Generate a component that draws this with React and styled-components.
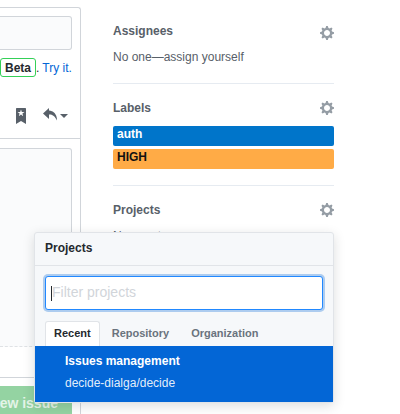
import React from "react";
import styled, { createGlobalStyle } from "styled-components";

const Global = createGlobalStyle`
  html, body { margin: 0; padding: 0; background: #fff; }
  body { font-family: "Liberation Sans", Arial, sans-serif; font-size: 12px; color: #24292e; }
`;

const Page = styled.div`
  position: relative;
  display: flex;
  align-items: flex-start;
  width: 400px;
  height: 414px;
  overflow: hidden;
  background: #fff;
`;

const Card = styled.div`
  flex: none;
  width: 81px;
  height: 407px;
  margin-top: 7px;
  box-sizing: border-box;
  display: flex;
  flex-direction: column;
  border-top: 1px solid #d1d5da;
  border-right: 1px solid #d1d5da;
  border-top-right-radius: 3px;
`;

const TitleInput = styled.div`
  flex: none;
  height: 34px;
  margin: 8px 8px 0 0;
  box-sizing: border-box;
  background: #fafbfc;
  border: 1px solid #d1d5da;
  border-left: none;
  border-radius: 0 3px 3px 0;
`;

const BetaRow = styled.div`
  flex: none;
  display: flex;
  align-items: center;
  height: 19px;
  margin-top: 8px;
  color: #0366d6;
  white-space: nowrap;
`;

const Beta = styled.span`
  display: inline-flex;
  align-items: center;
  justify-content: center;
  box-sizing: border-box;
  width: 36px;
  height: 19px;
  border: 1px solid #34d058;
  border-radius: 3px;
  font-weight: 700;
  color: #24292e;
`;

const Dot = styled.span`
  color: #24292e;
`;

const TryIt = styled.span`
  margin-left: 3px;
`;

const Toolbar = styled.div`
  flex: none;
  display: flex;
  align-items: flex-start;
  height: 62px;
  box-sizing: border-box;
  padding: 31px 0 0 16px;
  border-bottom: 1px solid #d1d5da;
`;

const BookmarkIcon = styled.svg`
  width: 10px;
  height: 16px;
  fill: #586069;
`;

const ReplyIcon = styled.svg`
  width: 14px;
  height: 16px;
  margin: -1px 0 0 17px;
  fill: #586069;
`;

const Caret = styled.span`
  width: 0;
  height: 0;
  margin: 6px 0 0 3px;
  border: 4px solid transparent;
  border-bottom: none;
  border-top-color: #586069;
`;

const Editor = styled.div`
  flex: none;
  height: 230px;
  margin: 9px 8px 0 0;
  box-sizing: border-box;
  display: flex;
  flex-direction: column;
  background: #fafbfc;
  border: 1px solid #d1d5da;
  border-left: none;
  border-radius: 0 3px 3px 0;
`;

const EditorBody = styled.div`
  flex: 1;
  border-bottom: 1px dashed #dfe2e5;
`;

const EditorHint = styled.div`
  height: 30px;
  background: #fff;
`;

const SubmitButton = styled.div`
  flex: none;
  display: flex;
  justify-content: flex-end;
  align-items: center;
  height: 34px;
  width: 72px;
  margin-top: 8px;
  padding-right: 14px;
  box-sizing: border-box;
  background: #94d3a2;
  border-radius: 0 3px 3px 0;
  color: rgba(255, 255, 255, 0.75);
  font-size: 14px;
  font-weight: 700;
  white-space: nowrap;
`;

const Sidebar = styled.div`
  flex: none;
  width: 221px;
  margin-left: 32px;
  display: flex;
  flex-direction: column;
`;

const Section = styled.div`
  padding: ${(p) => p.$top}px 0 ${(p) => p.$bottom}px;
  border-bottom: 1px solid #e6ebf1;
`;

const SectionHead = styled.div`
  display: flex;
  justify-content: space-between;
  align-items: flex-start;
  height: 16px;
  line-height: 16px;
  font-weight: 700;
  color: #586069;
`;

const Gear = styled.svg`
  width: 14px;
  height: 16px;
  margin-top: ${(p) => p.$drop || 0}px;
  fill: #959da5;
`;

const Muted = styled.div`
  margin-top: 9px;
  line-height: 18px;
  color: #586069;
`;

const LabelList = styled.div`
  display: flex;
  flex-direction: column;
  gap: 3px;
  margin-top: 10px;
`;

const Label = styled.div`
  height: 20px;
  padding: 0 4px;
  line-height: 16px;
  font-weight: 700;
  border-radius: 2px;
  background: ${(p) => p.$bg};
  color: ${(p) => p.$fg};
`;

const Popup = styled.div`
  position: absolute;
  left: 34px;
  top: 232px;
  width: 300px;
  height: 171px;
  box-sizing: border-box;
  display: flex;
  flex-direction: column;
  background: #f6f8fa;
  border: 1px solid #e1e4e8;
  border-radius: 3px;
  box-shadow: 0 3px 12px rgba(27, 31, 35, 0.15);
`;

const PopupHeader = styled.div`
  flex: none;
  height: 33px;
  box-sizing: border-box;
  padding: 0 10px 2px;
  display: flex;
  align-items: center;
  font-weight: 700;
  color: #24292e;
  border-bottom: 1px solid #e1e4e8;
`;

const FilterWrap = styled.div`
  position: relative;
  flex: none;
  margin: 10px 10px 0;
`;

const FilterInput = styled.input`
  display: block;
  width: 100%;
  height: 34px;
  box-sizing: border-box;
  padding: 0 6px 2px;
  background: #fff;
  border: 1px solid #2188ff;
  border-radius: 3px;
  box-shadow: 0 0 0 2px rgba(3, 102, 214, 0.3);
  outline: none;
  font: 14px "Liberation Sans", Arial, sans-serif;
  &::placeholder { color: #d1d5da; opacity: 1; }
`;

const TextCaret = styled.span`
  position: absolute;
  left: 6px;
  top: 10px;
  width: 1px;
  height: 15px;
  background: #24292e;
`;

const Tabs = styled.div`
  flex: none;
  display: flex;
  align-items: flex-end;
  height: 25px;
  margin-top: 11px;
  padding-left: 10px;
`;

const Tab = styled.div`
  height: 25px;
  box-sizing: border-box;
  padding: 0 ${(p) => (p.$active ? 8 : 10)}px 2px;
  margin-right: ${(p) => (p.$active ? 1 : 0)}px;
  display: flex;
  align-items: center;
  font-size: 11px;
  font-weight: 700;
  color: ${(p) => (p.$active ? "#24292e" : "#6a737d")};
  background: ${(p) => (p.$active ? "#fff" : "transparent")};
  border: 1px solid ${(p) => (p.$active ? "#e1e4e8" : "transparent")};
  border-bottom: none;
  border-radius: 3px 3px 0 0;
`;

const Item = styled.div`
  flex: 1;
  padding: 7px 0 0 30px;
  background: #0366d6;
  color: #fff;
`;

const ItemTitle = styled.div`
  font-weight: 700;
  line-height: 16px;
`;

const ItemSub = styled.div`
  margin-top: 6px;
  line-height: 16px;
  color: rgba(255, 255, 255, 0.9);
`;

const GearIcon = ({ drop }) => (
  <Gear viewBox="0 0 14 16" $drop={drop}>
    <path
      fillRule="evenodd"
      d="M14 8.77v-1.6l-1.94-.64-.45-1.09.88-1.84-1.13-1.13-1.81.91-1.09-.45-.69-1.92h-1.6l-.63 1.94-1.11.45-1.84-.88-1.13 1.13.91 1.81-.45 1.09L0 7.23v1.59l1.94.64.45 1.09-.88 1.84 1.13 1.13 1.81-.91 1.09.45.69 1.92h1.59l.63-1.94 1.11-.45 1.84.88 1.13-1.13-.92-1.81.47-1.09L14 8.75v.02zM7 11c-1.66 0-3-1.34-3-3s1.34-3 3-3 3 1.34 3 3-1.34 3-3 3z"
    />
  </Gear>
);

export default function App() {
  return (
    <Page>
      <Global />
      <Card>
        <TitleInput />
        <BetaRow>
          <Beta>Beta</Beta>
          <Dot>.</Dot>
          <TryIt>Try it.</TryIt>
        </BetaRow>
        <Toolbar>
          <BookmarkIcon viewBox="0 0 10 16" preserveAspectRatio="none">
            <path
              fillRule="evenodd"
              d="M9 0H1C.27 0 0 .27 0 1v15l5-3.09L10 16V1c0-.73-.27-1-1-1zm-.78 4.25L6.36 5.61l.72 2.16c.06.22-.02.28-.2.17L5 6.6 3.12 7.94c-.19.11-.25.05-.2-.17l.72-2.16-1.86-1.36c-.17-.16-.14-.23.09-.23l2.3-.03.7-2.16h.25l.7 2.16 2.3.03c.23 0 .27.08.09.23h.01z"
            />
          </BookmarkIcon>
          <ReplyIcon viewBox="0 0 14 16">
            <path fillRule="evenodd" d="M6 3.5c3.92.44 8 3.125 8 10-2.312-5.062-4.75-6.112-8-6V12L0 6.5 6 1v2.5z" />
          </ReplyIcon>
          <Caret />
        </Toolbar>
        <Editor>
          <EditorBody />
          <EditorHint />
        </Editor>
        <SubmitButton>New issue</SubmitButton>
      </Card>
      <Sidebar>
        <Section $top={23} $bottom={17}>
          <SectionHead>
            Assignees
            <GearIcon drop={2} />
          </SectionHead>
          <Muted>No one—assign yourself</Muted>
        </Section>
        <Section $top={16} $bottom={16}>
          <SectionHead>
            Labels
            <GearIcon />
          </SectionHead>
          <LabelList>
            <Label $bg="#0075ca" $fg="#fff">auth</Label>
            <Label $bg="#ffab46" $fg="#111">HIGH</Label>
          </LabelList>
        </Section>
        <Section $top={16} $bottom={18}>
          <SectionHead>
            Projects
            <GearIcon />
          </SectionHead>
          <Muted>None yet</Muted>
        </Section>
        <Section $top={15} $bottom={17}>
          <SectionHead>
            Milestone
            <GearIcon />
          </SectionHead>
          <Muted>No milestone</Muted>
        </Section>
      </Sidebar>
      <Popup>
        <PopupHeader>Projects</PopupHeader>
        <FilterWrap>
          <FilterInput placeholder="Filter projects" readOnly />
          <TextCaret />
        </FilterWrap>
        <Tabs>
          <Tab $active>Recent</Tab>
          <Tab>Repository</Tab>
          <Tab>Organization</Tab>
        </Tabs>
        <Item>
          <ItemTitle>Issues management</ItemTitle>
          <ItemSub>decide-dialga/decide</ItemSub>
        </Item>
      </Popup>
    </Page>
  );
}
